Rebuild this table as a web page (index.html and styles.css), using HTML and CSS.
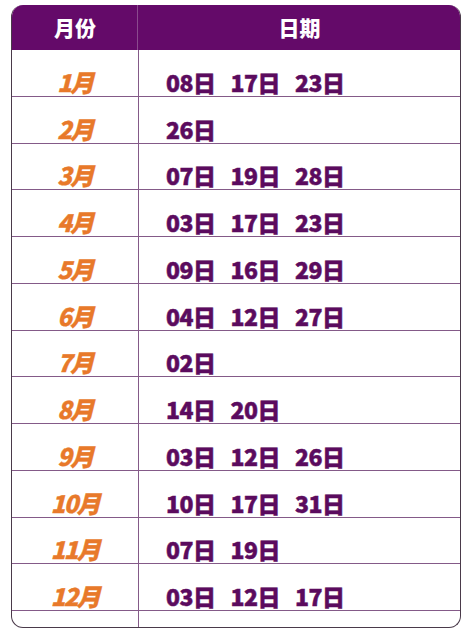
FILE: index.html
```html
<!DOCTYPE html>
<html lang="zh">
<head>
<meta charset="utf-8">
<link rel="stylesheet" href="styles.css">
</head>
<body>
<div class="table">
  <div class="row head">
    <div class="c1">月份</div>
    <div class="c2">日期</div>
  </div>
  <div class="row"><div class="c1 m">1月</div><div class="c2 d"><span>08日</span><span>17日</span><span>23日</span></div></div>
  <div class="row"><div class="c1 m">2月</div><div class="c2 d"><span>26日</span></div></div>
  <div class="row"><div class="c1 m">3月</div><div class="c2 d"><span>07日</span><span>19日</span><span>28日</span></div></div>
  <div class="row"><div class="c1 m">4月</div><div class="c2 d"><span>03日</span><span>17日</span><span>23日</span></div></div>
  <div class="row"><div class="c1 m">5月</div><div class="c2 d"><span>09日</span><span>16日</span><span>29日</span></div></div>
  <div class="row"><div class="c1 m">6月</div><div class="c2 d"><span>04日</span><span>12日</span><span>27日</span></div></div>
  <div class="row"><div class="c1 m">7月</div><div class="c2 d"><span>02日</span></div></div>
  <div class="row"><div class="c1 m">8月</div><div class="c2 d"><span>14日</span><span>20日</span></div></div>
  <div class="row"><div class="c1 m">9月</div><div class="c2 d"><span>03日</span><span>12日</span><span>26日</span></div></div>
  <div class="row"><div class="c1 m">10月</div><div class="c2 d"><span>10日</span><span>17日</span><span>31日</span></div></div>
  <div class="row"><div class="c1 m">11月</div><div class="c2 d"><span>07日</span><span>19日</span></div></div>
  <div class="row"><div class="c1 m">12月</div><div class="c2 d"><span>03日</span><span>12日</span><span>17日</span></div></div>
  <div class="row foot"><div class="c1"></div><div class="c2"></div></div>
</div>
</body>
</html>
```
FILE: styles.css
```css
html, body {
  margin: 0;
  padding: 0;
  background: #ffffff;
}
body {
  padding: 5px 0 0 11px;
  font-family: "Noto Sans CJK SC", "Noto Sans", sans-serif;
  font-weight: 900;
}
.table {
  width: 448px;
  border: 1px solid #4a3a4a;
  border-top: none;
  border-radius: 12px;
  overflow: hidden;
}
.row {
  display: grid;
  grid-template-columns: 127px 1fr;
  height: 46.75px;
  box-sizing: border-box;
  border-bottom: 1px solid #845a88;
}
.c1 {
  border-right: 1px solid #845a88;
}
.head {
  height: 45px;
  background: #640a69;
  border-bottom: none;
  margin: 0 -1px;
  color: #ffffff;
  font-size: 21px;
}
.head .c1, .head .c2 {
  display: flex;
  align-items: center;
  justify-content: center;
  padding-bottom: 2px;
}
.head .c1 {
  border-right: 1px solid #8a4a8e;
  padding-left: 2px;
}
.m {
  display: flex;
  align-items: flex-end;
  justify-content: center;
  color: #e8792a;
  font-style: italic;
  font-size: 24px;
  line-height: 28px;
  letter-spacing: -1.5px;
  -webkit-text-stroke: 0.4px #e8792a;
}
.d {
  display: flex;
  align-items: flex-end;
  gap: 15px;
  padding-left: 27px;
  color: #5b0b5e;
  font-size: 23px;
  line-height: 28px;
  letter-spacing: -0.5px;
  -webkit-text-stroke: 0.5px #5b0b5e;
}
.foot {
  height: 16px;
  border-bottom: none;
}
```
